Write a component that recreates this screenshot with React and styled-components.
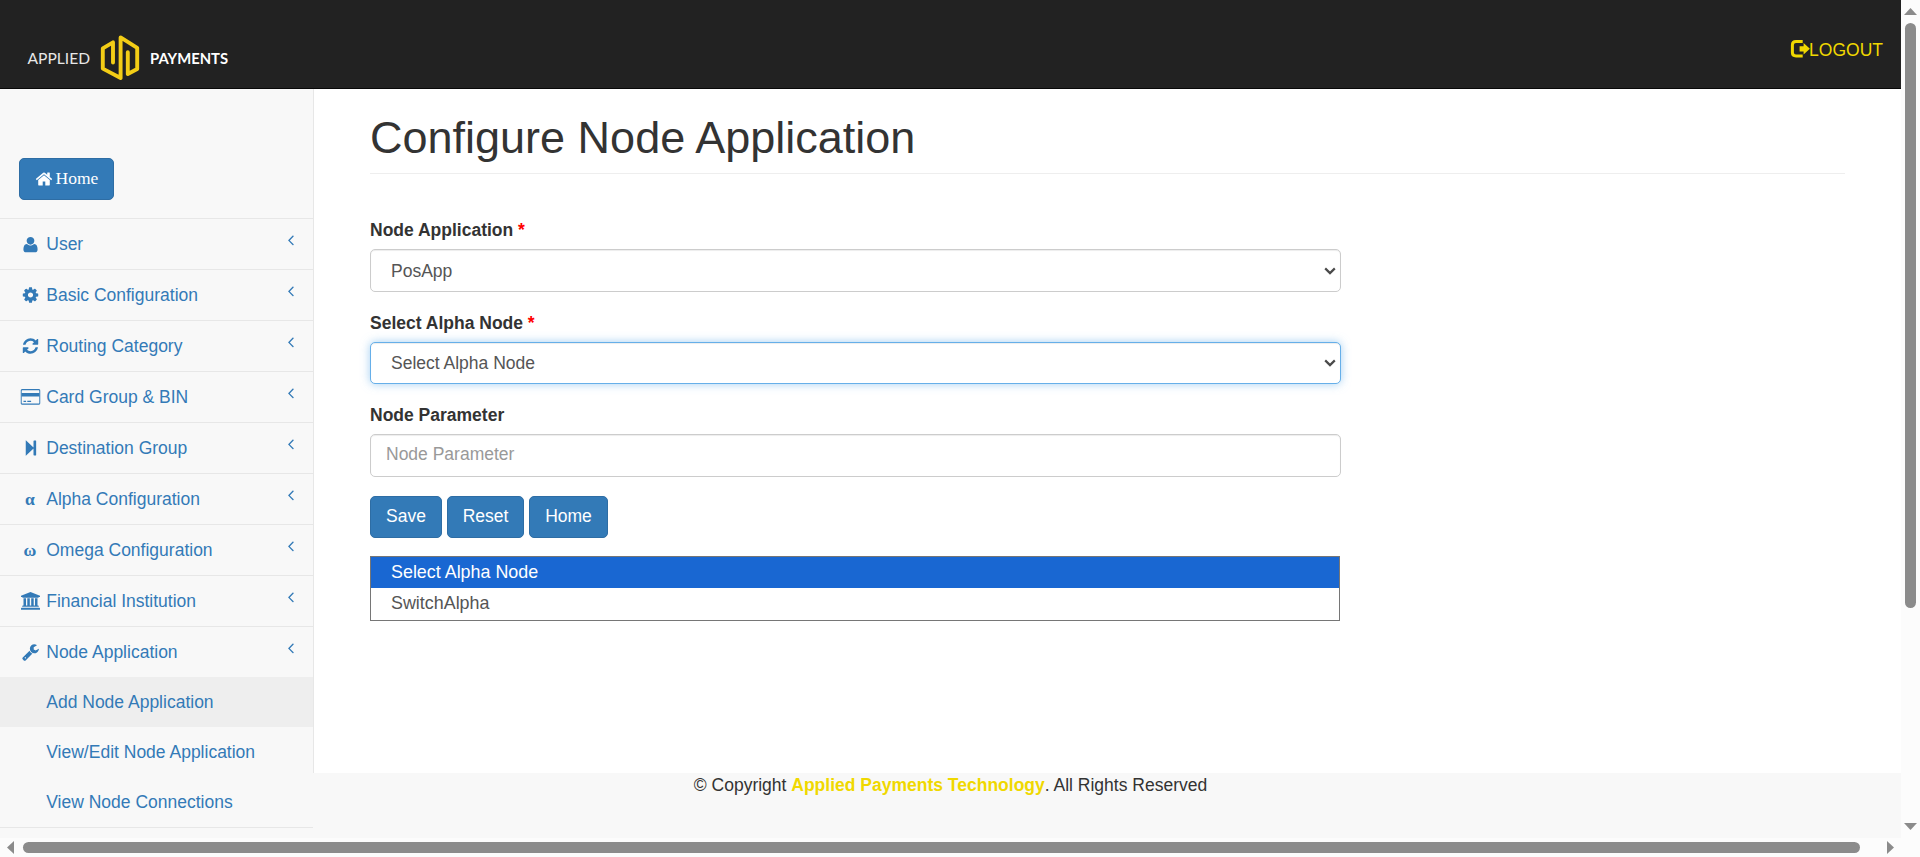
import React from 'react';
import styled, { createGlobalStyle } from 'styled-components';

const GlobalStyle = createGlobalStyle`
  *, *::before, *::after { box-sizing: border-box; }
  body {
    margin: 0;
    overflow: hidden;
    background: #f8f8f8;
    color: #333;
    font-family: "Liberation Sans", Arial, sans-serif;
    font-size: 17.5px;
    line-height: 25px;
  }
`;

const Frame = styled.div`
  display: grid;
  grid-template-columns: 1901px 19px;
  grid-template-rows: 838px 19px;
  width: 1920px;
  height: 857px;
`;

const Page = styled.div`
  display: flex;
  flex-direction: column;
  background: #f8f8f8;
  overflow: hidden;
`;

const Navbar = styled.header`
  display: flex;
  justify-content: space-between;
  align-items: flex-start;
  flex: none;
  height: 89px;
  padding: 0 18px 0 27px;
  background: #222;
  border-bottom: 1px solid #080808;
`;

const Logo = styled.svg`
  display: block;
  margin-top: 33px;
  font-family: Lato, sans-serif;
`;

const Logout = styled.a`
  display: flex;
  align-items: flex-start;
  margin-top: 38px;
  color: #f0d800;
  svg { display: block; margin: 2px -1px 0 0; }
`;

const Columns = styled.div`
  display: flex;
  flex: none;
  height: 684px;
`;

const Sidebar = styled.nav`
  position: relative;
  z-index: 1;
  flex: none;
  width: 313px;
`;

const HomeBox = styled.div`
  padding: 69px 19px 18px;
  border-bottom: 1px solid #e7e7e7;
`;

const Button = styled.button`
  display: inline-flex;
  justify-content: center;
  align-items: center;
  height: 42px;
  width: ${(p) => p.$width}px;
  padding: 0 0 ${(p) => (p.$serif ? 1 : 2)}px;
  color: #fff;
  background: #337ab7;
  border: 1px solid #2e6da4;
  border-radius: 5px;
  font-family: ${(p) => (p.$serif ? '"Liberation Serif", "Times New Roman", serif' : 'inherit')};
  font-size: 17.5px;
  line-height: 25px;
  svg { margin-right: 3px; }
`;

const MenuRow = styled.a`
  display: flex;
  align-items: flex-start;
  height: ${(p) => (p.$open ? 50 : 51)}px;
  padding: 12.5px 17px 0 18.75px;
  color: #337ab7;
  border-bottom: ${(p) => (p.$open ? 'none' : '1px solid #e7e7e7')};
`;

const IconSlot = styled.span`
  display: flex;
  justify-content: center;
  align-items: center;
  flex: none;
  width: 22.5px;
  height: 25px;
  margin-right: 5px;
  font-family: "Liberation Serif", "Times New Roman", serif;
  font-weight: bold;
  svg { flex: none; transform: translateX(0.5px); }
`;

const Chevron = styled.svg`
  margin: -1px -3px 0 auto;
`;

const SubMenu = styled.div`
  border-bottom: 1px solid #e7e7e7;
`;

const SubItem = styled.a`
  display: block;
  height: 50px;
  padding: 12.5px 0 0 46.25px;
  color: #337ab7;
  background: ${(p) => (p.$active ? '#eee' : 'transparent')};
`;

const Main = styled.main`
  flex: 1;
  padding: 0 56px 0 56px;
  background: #fff;
  border-left: 1px solid #e7e7e7;
`;

const Title = styled.h1`
  height: 85px;
  margin: 0 0 44px;
  padding-top: 24px;
  border-bottom: 1px solid #eee;
  font-size: 45px;
  line-height: 49px;
  font-weight: 400;
`;

const Form = styled.form`
  display: flex;
  flex-direction: column;
  width: 971px;
`;

const Label = styled.label`
  height: 25px;
  margin-bottom: 6px;
  font-weight: bold;
`;

const Required = styled.span`
  color: red;
`;

const Select = styled.div`
  display: flex;
  justify-content: space-between;
  align-items: center;
  height: ${(p) => (p.$focused ? 42 : 43)}px;
  margin-bottom: 19px;
  padding: ${(p) => (p.$focused ? 0 : 1)}px 4px 0 20px;
  color: #555;
  background: #fff;
  border: 1px solid ${(p) => (p.$focused ? '#66afe9' : '#ccc')};
  border-radius: 5px;
  box-shadow: inset 0 1px 1px rgba(0, 0, 0, 0.075)
    ${(p) => (p.$focused ? ', 0 0 10px rgba(102, 175, 233, 0.6)' : '')};
`;

const Input = styled.input`
  height: 43px;
  margin: 0 0 19px;
  padding: 0 15px 2px;
  color: #555;
  background: #fff;
  border: 1px solid #ccc;
  border-radius: 5px;
  box-shadow: inset 0 1px 1px rgba(0, 0, 0, 0.075);
  font: inherit;
  &::placeholder { color: #999; opacity: 1; }
`;

const Actions = styled.div`
  display: flex;
  gap: 5px;
  margin-bottom: 18px;
`;

const Options = styled.div`
  width: 970px;
  height: 65px;
  background: #fff;
  border: 1px solid #767676;
`;

const Option = styled.div`
  height: 31px;
  padding: 3px 20px 0;
  font-size: 17.9px;
  color: ${(p) => (p.$selected ? '#fff' : '#555')};
  background: ${(p) => (p.$selected ? '#1967d2' : '#fff')};
`;

const Footer = styled.footer`
  flex: 1;
  text-align: center;
  b { color: #f0d800; }
`;

const VScroll = styled.div`
  display: flex;
  flex-direction: column;
  align-items: center;
  background: #fcfcfc;
`;

const HScroll = styled.div`
  display: flex;
  align-items: center;
  background: #fcfcfc;
`;

const Thumb = styled.div`
  width: ${(p) => p.$w}px;
  height: ${(p) => p.$h}px;
  background: #8b8b8b;
  border-radius: 6px;
`;

const Arrow = styled.svg`
  display: block;
  flex: none;
  margin: ${(p) => p.$m};
  fill: #8b8b8b;
`;

const Corner = styled.div`
  background: #fcfcfc;
`;

const paths = {
  cog: 'M1152 896q0-106-75-181t-181-75-181 75-75 181 75 181 181 75 181-75 75-181zm512-109v222q0 12-8 23t-20 13l-185 28q-19 54-39 91 35 50 107 138 10 12 10 25t-9 23q-27 37-99 108t-94 71q-12 0-26-9l-138-108q-44 23-91 38-16 136-29 186-7 28-36 28h-222q-14 0-24.5-8.5t-11.5-21.5l-28-184q-49-16-90-37l-141 107q-10 9-25 9-14 0-25-11-126-114-165-168-7-10-7-23 0-12 8-23 15-21 51-66.5t54-70.5q-27-50-41-99l-183-27q-13-2-21-12.5t-8-23.5v-222q0-12 8-23t19-13l186-28q14-46 39-92-40-57-107-138-10-12-10-24 0-10 9-23 26-36 98.5-107.5t94.5-71.5q13 0 26 10l138 107q44-23 91-38 16-136 29-186 7-28 36-28h222q14 0 24.5 8.5t11.5 21.5l28 184q49 16 90 37l142-107q9-9 24-9 13 0 25 10 129 119 165 170 7 8 7 22 0 12-8 23-15 21-51 66.5t-54 70.5q26 50 41 98l183 28q13 2 21 12.5t8 23.5z',
  refresh: 'M1639 1056q0 5-1 7-64 268-268 434.5t-478 166.5q-146 0-282.5-55t-243.5-157l-129 129q-19 19-45 19t-45-19-19-45v-448q0-26 19-45t45-19h448q26 0 45 19t19 45-19 45l-137 137q71 66 161 102t187 36q134 0 250-65t186-179q11-17 53-117 8-23 30-23h192q13 0 22.5 9.5t9.5 22.5zm25-800v448q0 26-19 45t-45 19h-448q-26 0-45-19t-19-45 19-45l138-138q-148-137-349-137-134 0-250 65t-186 179q-11 17-53 117-8 23-30 23h-199q-13 0-22.5-9.5t-9.5-22.5v-7q65-268 270-434.5t480-166.5q146 0 284 55.5t245 156.5l130-129q19-19 45-19t45 19 19 45z',
  wrench: 'M448 1472q0-26-19-45t-45-19-45 19-19 45 19 45 45 19 45-19 19-45zm644-420l-682 682q-37 37-90 37-52 0-91-37l-106-108q-38-36-38-90 0-53 38-91l681-681q39 98 114.5 173.5t173.5 114.5zm634-435q0 39-23 106-47 134-164.5 217.5t-258.5 83.5q-185 0-316.5-131.5t-131.5-316.5 131.5-316.5 316.5-131.5q58 0 121.5 16.5t107.5 46.5q16 11 16 28t-16 28l-293 169v224l193 107q5-3 79-48.5t135.5-81 70.5-35.5q15 0 23.5 10t8.5 25z',
  home: 'M1472 992v480q0 26-19 45t-45 19h-384v-384h-256v384h-384q-26 0-45-19t-19-45v-480q0-1 .5-3t.5-3l575-474 575 474q1 2 1 6zm223-69l-62 74q-8 9-21 11h-3q-13 0-21-7l-692-577-692 577q-12 8-24 7-13-2-21-11l-62-74q-8-10-7-23.5t11-21.5l719-599q32-26 76-26t76 26l244 204v-195q0-14 9-23t23-9h192q14 0 23 9t9 23v408l219 182q10 8 11 21.5t-7 23.5z',
};

const Glyph = ({ name, size = 18 }) => (
  <svg width={size} height={size} viewBox="0 0 1792 1792" fill="currentColor">
    <path d={paths[name]} />
  </svg>
);

const UserIcon = () => (
  <svg width="18" height="18" viewBox="0 0 1792 1792" fill="currentColor">
    <path
      transform="translate(192 1600) scale(1 -1)"
      d="M1408 131q0-120-73-189.5t-194-69.5h-874q-121 0-194 69.5t-73 189.5q0 53 3.5 103.5t14 109t26.5 108.5t43 97.5t62 81t85.5 53.5t111.5 20q9 0 42-21.5t74.5-48t108-48t133.5-21.5t133.5 21.5t108 48t74.5 48t42 21.5q61 0 111.5-20t85.5-53.5t62-81t43-97.5t26.5-108.5t14-109t3.5-103.5zM1088 1024q0-159-112.5-271.5t-271.5-112.5t-271.5 112.5t-112.5 271.5t112.5 271.5t271.5 112.5t271.5-112.5t112.5-271.5z"
    />
  </svg>
);

const CardIcon = () => (
  <svg width="20" height="16" viewBox="0 0 20 16">
    <rect x=".6" y=".6" width="18.8" height="14.6" rx="1.1" fill="none" stroke="currentColor" strokeWidth="1.2" />
    <path d="M1 4h18v3.6H1zM3 11.8h2.6V13H3zM6.8 11.8h3.8V13H6.8z" fill="currentColor" />
  </svg>
);

const StepIcon = () => (
  <svg width="11" height="16" viewBox="0 0 11 16" fill="currentColor">
    <path d="M0 .6Q0 0 .6.5L8 7.4V1.2Q8 .6 8.6 .6h1.6q.6 0 .6.6v13.6q0 .6-.6.6H8.6q-.6 0-.6-.6V8.6L.6 15.5Q0 16 0 15.4z" />
  </svg>
);

const BankIcon = () => (
  <svg width="20" height="18" viewBox="0 0 20 18" fill="currentColor">
    <path d="M10 0l9.5 3.8V5h-1.2q0 .7-.7.7H2.4q-.7 0-.7-.7H.5V3.8zM3 6.3h2.5v7.2h1.3V6.3h2.5v7.2h1.4V6.3h2.5v7.2h1.3V6.3H17v7.2h.6q.7 0 .7.7v.6H1.7v-.6q0-.7.7-.7H3zM1.2 15.8h17.6q.7 0 .7.6v1.3H.5v-1.3q0-.6.7-.6z" />
  </svg>
);

const LogoutIcon = () => (
  <svg width="20" height="18" viewBox="0 0 20 18">
    <path d="M12.7 1.6H6Q2.4 1.6 2.4 5v7.6q0 3.4 3.6 3.4h6.7" fill="none" stroke="currentColor" strokeWidth="3" />
    <path d="M9.6 6.2H13.6V3.1L19.9 8.8 13.6 14.5V11.4H9.6z" fill="currentColor" />
  </svg>
);

const Angle = () => (
  <Chevron width="17.5" height="17.5" viewBox="0 0 1792 1792" fill="#337ab7">
    <path d="M1203 544q0 13-10 23l-393 393 393 393q10 10 10 23t-10 23l-50 50q-10 10-23 10t-23-10l-466-466q-10-10-10-23t10-23l466-466q10-10 23-10t23 10l50 50q10 10 10 23z" />
  </Chevron>
);

const Caret = () => (
  <svg width="12" height="8" viewBox="0 0 12 8" fill="none" stroke="#4a4a4a" strokeWidth="2.2">
    <path d="M1.2 1.4L6 6.1L10.8 1.4" />
  </svg>
);

const menu = [
  ['User', <UserIcon />],
  ['Basic Configuration', <Glyph name="cog" />],
  ['Routing Category', <Glyph name="refresh" />],
  ['Card Group & BIN', <CardIcon />],
  ['Destination Group', <StepIcon />],
  ['Alpha Configuration', 'α'],
  ['Omega Configuration', 'ω'],
  ['Financial Institution', <BankIcon />],
  ['Node Application', <Glyph name="wrench" />],
];

export default function App() {
  return (
    <>
      <GlobalStyle />
      <Frame>
        <Page>
          <Navbar>
            <Logo width="204" height="50" viewBox="27 33 204 50">
              <text x="27.5" y="64" fontSize="15.5" fontWeight="400" fill="#e8e8e8" textLength="62.5" lengthAdjust="spacingAndGlyphs">APPLIED</text>
              <path
                d="M113 62.5V42.3L102.8 48.4V68.6L120.6 78V37.4L137.2 47.8V69L127.8 74V52.2"
                fill="none"
                stroke="#f3cd16"
                strokeWidth="3.9"
                strokeLinecap="round"
                strokeLinejoin="round"
              />
              <text x="150" y="64" fontSize="15.5" fontWeight="700" fill="#fff" textLength="78" lengthAdjust="spacingAndGlyphs">PAYMENTS</text>
            </Logo>
            <Logout>
              <LogoutIcon />
              LOGOUT
            </Logout>
          </Navbar>
          <Columns>
            <Sidebar>
              <HomeBox>
                <Button $width={95} $serif>
                  <Glyph name="home" />
                  Home
                </Button>
              </HomeBox>
              {menu.map(([label, icon], i) => (
                <MenuRow key={label} $open={i === menu.length - 1}>
                  <IconSlot>{icon}</IconSlot>
                  {label}
                  <Angle />
                </MenuRow>
              ))}
              <SubMenu>
                <SubItem $active>Add Node Application</SubItem>
                <SubItem>View/Edit Node Application</SubItem>
                <SubItem>View Node Connections</SubItem>
              </SubMenu>
            </Sidebar>
            <Main>
              <Title>Configure Node Application</Title>
              <Form>
                <Label>Node Application <Required>*</Required></Label>
                <Select>PosApp<Caret /></Select>
                <Label>Select Alpha Node <Required>*</Required></Label>
                <Select $focused>Select Alpha Node<Caret /></Select>
                <Label>Node Parameter</Label>
                <Input placeholder="Node Parameter" />
                <Actions>
                  <Button type="button" $width={72}>Save</Button>
                  <Button type="button" $width={77}>Reset</Button>
                  <Button type="button" $width={79}>Home</Button>
                </Actions>
                <Options>
                  <Option $selected>Select Alpha Node</Option>
                  <Option>SwitchAlpha</Option>
                </Options>
              </Form>
            </Main>
          </Columns>
          <Footer>
            © Copyright <b>Applied Payments Technology</b>. All Rights Reserved
          </Footer>
        </Page>
        <VScroll>
          <Arrow $m="8px 0 8px" width="13" height="7" viewBox="0 0 13 7"><path d="M0 7L6.5 0L13 7z" /></Arrow>
          <Thumb $w={11} $h={585} />
          <Arrow $m="auto 0 8px" width="13" height="7" viewBox="0 0 13 7"><path d="M0 0L6.5 7L13 0z" /></Arrow>
        </VScroll>
        <HScroll>
          <Arrow $m="0 9px 0 7px" width="7" height="13" viewBox="0 0 7 13"><path d="M7 0L0 6.5L7 13z" /></Arrow>
          <Thumb $w={1837} $h={11} />
          <Arrow $m="0 7px 0 auto" width="7" height="13" viewBox="0 0 7 13"><path d="M0 0L7 6.5L0 13z" /></Arrow>
        </HScroll>
        <Corner />
      </Frame>
    </>
  );
}
